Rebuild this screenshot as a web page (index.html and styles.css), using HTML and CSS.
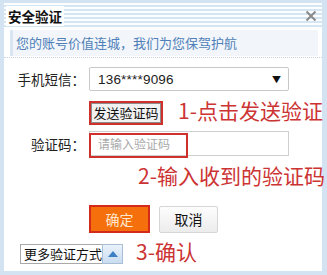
FILE: index.html
```html
<!DOCTYPE html>
<html lang="zh-CN">
<head>
<meta charset="utf-8">
<link rel="stylesheet" href="styles.css">
</head>
<body>
<div class="dialog">
  <div class="titlebar">
    <span class="title">安全验证</span>
    <svg class="close" width="12" height="12" viewBox="0 0 12 12"><path d="M1.5 1.5 L10.5 10.5 M10.5 1.5 L1.5 10.5" stroke="#8a8a8a" stroke-width="2" fill="none"/></svg>
  </div>
  <div class="tip"><span>您的账号价值连城，我们为您保驾护航</span></div>
  <div class="form">
    <div class="row r1">
      <span class="label">手机短信：</span>
      <div class="select"><span class="num">136****9096</span><span class="caret">▼</span></div>
    </div>
    <div class="row r2">
      <span class="label"></span>
      <div><button class="send">发送验证码</button></div>
    </div>
    <div class="row r3">
      <span class="label">验证码：</span>
      <div class="input">请输入验证码</div>
    </div>
    <div class="row r4">
      <span class="label"></span>
      <div class="actions"><button class="ok">确定</button><button class="cancel">取消</button></div>
    </div>
    <div class="more">
      <span class="more-text">更多验证方式</span>
      <span class="more-btn"><svg width="12" height="8" viewBox="0 0 12 8"><path d="M1 7 L6 1 L11 7 Z" fill="#3f7fc4"/></svg></span>
    </div>
  </div>
  <div class="mark box-input"></div>
  <div class="note n1">1-点击发送验证</div>
  <div class="note n2">2-输入收到的验证码</div>
  <div class="note n3">3-确认</div>
</div>
</body>
</html>
```
FILE: styles.css
```css
* { box-sizing: border-box; }
html, body { margin: 0; padding: 0; background: #fff; }
body { font-family: "Noto Sans CJK SC", "Microsoft YaHei", sans-serif; }
.dialog {
  position: relative;
  width: 327px;
  height: 275px;
  border-style: solid;
  border-color: #d3e3f2;
  border-width: 3px 5px 4px 4px;
  background: #fff;
}
.titlebar {
  height: 26px;
  display: flex;
  align-items: center;
  justify-content: space-between;
  padding: 0 4px 0 2px;
  background: repeating-linear-gradient(to bottom, #fbfdff 0px, #fbfdff 2px, #d5e6f3 2px, #d5e6f3 4px);
}
.title {
  background: #fff;
  font-size: 13.5px;
  font-weight: bold;
  line-height: 20px;
  padding: 0 2px 0 2px;
  color: #111;
}
.close { margin-right: 1px; }
.tip {
  margin: 1px 4px 0 6px;
  height: 26px;
  background: #f2f6fb;
  border-left: 3px solid #d9e6f2;
  padding-left: 3px;
  display: flex;
  align-items: center;
}
.tip span { font-size: 13px; color: #4f7fb8; line-height: 16px; }
.form {
  border-top: 1px dotted #c6d4e2;
  margin-top: 1px;
  padding-top: 9px;
}
.row {
  display: grid;
  grid-template-columns: 81px 200px;
  column-gap: 4px;
  align-items: center;
}
.label { text-align: right; font-size: 13.5px; color: #222; line-height: 16px; white-space: nowrap; }
.r1 { height: 24px; }
.r2 { height: 24px; margin-top: 8px; }
.r3 { height: 25px; margin-top: 8px; }
.r4 { height: 28px; margin-top: 49px; }
.select {
  height: 24px;
  border: 1px solid #c9c9c9;
  border-radius: 2px;
  display: flex;
  align-items: center;
  justify-content: space-between;
  padding: 0 7px 0 8px;
}
.num { font-family: "Liberation Sans", Arial, sans-serif; font-size: 13.5px; color: #222; letter-spacing: 0.2px; }
.caret { font-size: 9px; color: #111; }
.send {
  height: 24px;
  width: 74px;
  padding: 0;
  margin: 0;
  border: 2px solid #d0302c;
  background: #f1f1f1;
  box-shadow: inset 0 0 0 1px #8c8c8c;
  font-family: inherit;
  font-size: 13px;
  color: #111;
  line-height: 16px;
}
.input {
  height: 25px;
  border: 1px solid #cfcfcf;
  display: flex;
  align-items: center;
  padding-left: 8px;
  font-size: 12px;
  color: #a9a9a9;
}
.actions { display: flex; gap: 9px; align-items: center; }
.ok {
  width: 61px;
  height: 28px;
  margin: 0;
  padding: 0;
  border: 2px solid #d42a1a;
  background: #f5700c;
  color: #ffe6cc;
  font-family: inherit;
  font-size: 14px;
}
.cancel {
  width: 59px;
  height: 27px;
  margin: 0;
  padding: 0;
  border: 1px solid #d6d6d6;
  border-radius: 2px;
  background: linear-gradient(#fdfdfd, #ececec);
  color: #111;
  font-family: inherit;
  font-size: 14px;
}
.more {
  margin: 11px 0 0 16px;
  display: flex;
  height: 20px;
}
.more-text {
  width: 82px;
  border: 1px solid #a9a9a9;
  border-right: none;
  font-size: 13px;
  line-height: 18px;
  padding-left: 3px;
  color: #111;
  background: #fff;
  white-space: nowrap;
  overflow: hidden;
}
.more-btn {
  width: 21px;
  border: 1px solid #a9bfd6;
  background: linear-gradient(#eaf2fb, #c9dcf0);
  display: flex;
  align-items: center;
  justify-content: center;
}
.mark {
  position: absolute;
  border: 2px solid #d0302c;
}
.box-input { left: 85px; top: 130px; width: 99px; height: 25px; }
.note {
  position: absolute;
  color: #cc3333;
  font-size: 21px;
  line-height: 24px;
  white-space: nowrap;
}
.n1 { left: 174px; top: 95px; }
.n2 { left: 134px; top: 160px; }
.n3 { left: 132px; top: 236px; }
```
